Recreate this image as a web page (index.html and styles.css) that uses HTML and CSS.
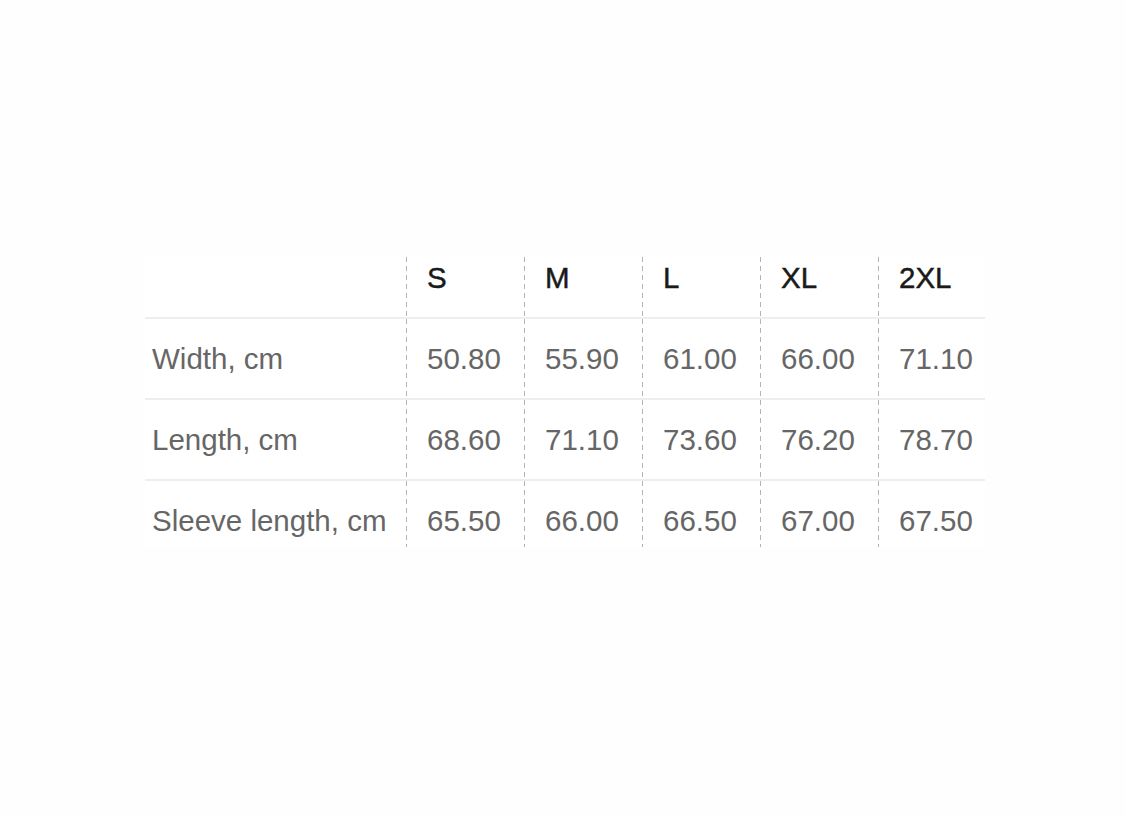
FILE: index.html
```html
<!DOCTYPE html>
<html lang="en">
<head>
<meta charset="utf-8">
<title>Size chart</title>
<link rel="stylesheet" href="styles.css">
</head>
<body>
<main class="page">
  <div class="chart">
    <div class="cell head label"></div>
    <div class="cell head size">S</div>
    <div class="cell head size">M</div>
    <div class="cell head size">L</div>
    <div class="cell head size">XL</div>
    <div class="cell head size">2XL</div>

    <div class="cell row label">Width, cm</div>
    <div class="cell row val">50.80</div>
    <div class="cell row val">55.90</div>
    <div class="cell row val">61.00</div>
    <div class="cell row val">66.00</div>
    <div class="cell row val">71.10</div>

    <div class="cell row label">Length, cm</div>
    <div class="cell row val">68.60</div>
    <div class="cell row val">71.10</div>
    <div class="cell row val">73.60</div>
    <div class="cell row val">76.20</div>
    <div class="cell row val">78.70</div>

    <div class="cell row last label">Sleeve length, cm</div>
    <div class="cell row last val">65.50</div>
    <div class="cell row last val">66.00</div>
    <div class="cell row last val">66.50</div>
    <div class="cell row last val">67.00</div>
    <div class="cell row last val">67.50</div>
  </div>
</main>
</body>
</html>
```

FILE: styles.css
```css
html, body {
  margin: 0;
  padding: 0;
  background: #fefefe;
}

.page {
  width: 1125px;
  height: 816px;
  box-sizing: border-box;
  padding: 257px 0 0 145px;
  font-family: "Liberation Sans", Arial, sans-serif;
}

.chart {
  display: grid;
  grid-template-columns: 261px 118px 118px 118px 118px 107px;
  width: 840px;
  background: #ffffff;
}

.cell {
  font-size: 29.5px;
  line-height: 30px;
  white-space: nowrap;
}

.head {
  padding: 6px 0 25px 0;
  color: #1a1a1a;
  -webkit-text-stroke: 0.45px #1a1a1a;
}

.row {
  padding: 25px 0 25px 0;
  color: #666666;
  border-top: 2px solid #eeeeee;
  margin-top: -1px;
}

.row.last {
  padding-bottom: 11px;
}

.label {
  padding-left: 7px;
}

.size,
.val {
  padding-left: 21px;
  background-image: linear-gradient(#b4b4b4 55%, transparent 55%);
  background-size: 1px 9px;
  background-repeat: repeat-y;
  background-position: left top;
}
```
